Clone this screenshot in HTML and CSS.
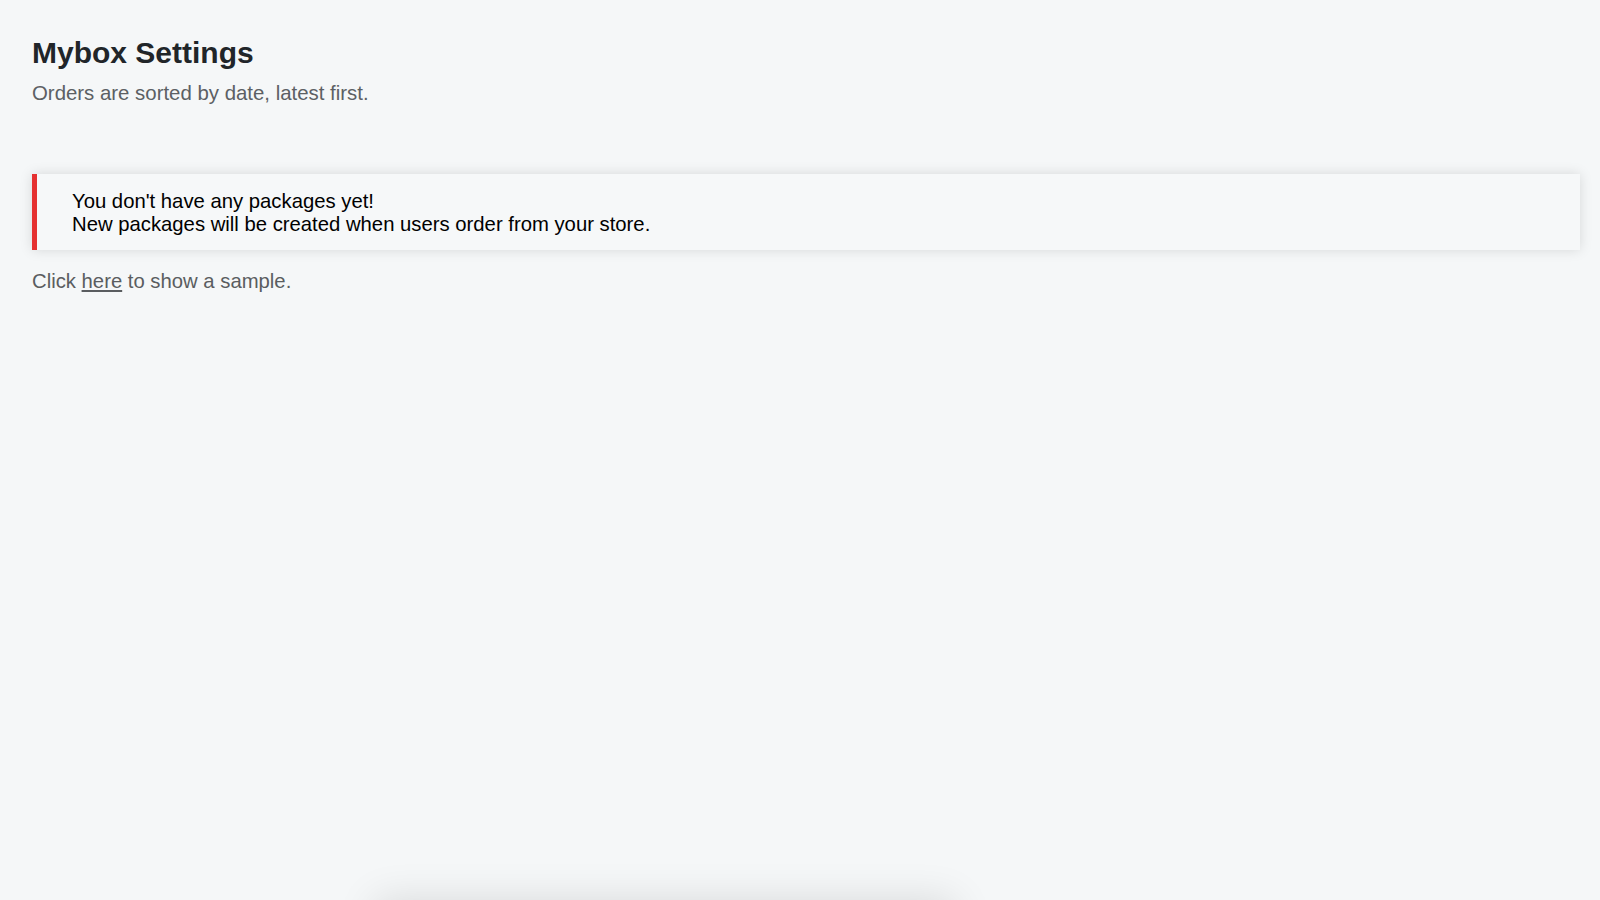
FILE: index.html
```html
<!DOCTYPE html>
<html lang="en">
<head>
<meta charset="utf-8">
<title>Mybox Settings</title>
<link rel="stylesheet" href="styles.css">
</head>
<body>
<main class="page">
  <header class="page-header">
    <h1 class="title">Mybox Settings</h1>
    <p class="subtitle">Orders are sorted by date, latest first.</p>
  </header>
  <section class="notice">
    <p class="notice-line">You don't have any packages yet!</p>
    <p class="notice-line">New packages will be created when users order from your store.</p>
  </section>
  <p class="sample">Click <a class="sample-link" href="#">here</a> to show a sample.</p>
</main>
<div class="toast"></div>
</body>
</html>
```

FILE: styles.css
```css
html, body {
  margin: 0;
  padding: 0;
  height: 100%;
  overflow: hidden;
}

body {
  background: #f5f7f8;
  font-family: "Liberation Sans", Arial, Helvetica, sans-serif;
}

.page {
  padding: 35px 20px 0 32px;
}

.page-header {
  display: flex;
  flex-direction: column;
  gap: 10px;
}

.title {
  margin: 0;
  font-size: 30px;
  line-height: 36px;
  font-weight: 700;
  color: #212529;
}

.subtitle {
  margin: 0;
  font-size: 20.4px;
  line-height: 24px;
  color: #5c6064;
}

.notice {
  margin-top: 69px;
  background: #f6f8f9;
  border-left: 5px solid #e53030;
  padding: 16px 20px 14px 35px;
  box-shadow: 0 0 12px rgba(0, 0, 0, 0.13);
}

.notice-line {
  margin: 0;
  font-size: 20.3px;
  line-height: 23px;
  color: #000;
}

.sample {
  margin: 19px 0 0;
  font-size: 20.3px;
  line-height: 24px;
  color: #5a5d60;
}

.sample-link {
  color: #5a5d60;
  text-decoration: underline;
}

.toast {
  position: fixed;
  left: 385px;
  width: 560px;
  bottom: -60px;
  height: 50px;
  background: #e4e6e8;
  box-shadow: 0 0 40px 10px rgba(0, 0, 0, 0.12);
}
```
